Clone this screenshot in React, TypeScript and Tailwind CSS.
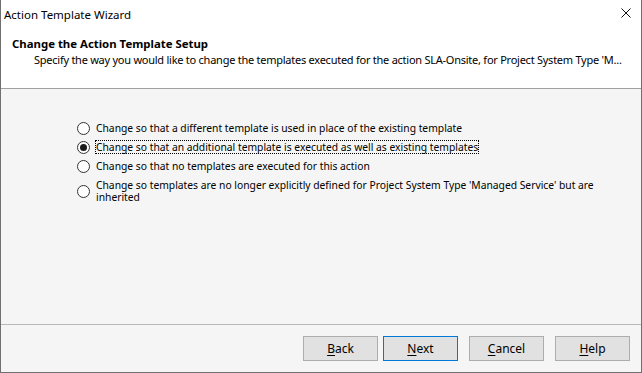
import React from "react";

const font = { fontFamily: '"Noto Sans", "Open Sans", sans-serif' };

function Radio({ checked }: { checked?: boolean }) {
  return (
    <span className="mt-[0px] flex h-[13px] w-[13px] shrink-0 items-center justify-center rounded-full border border-[#333333] bg-white">
      {checked && <span className="h-[7px] w-[7px] rounded-full bg-[#1a1a1a]" />}
    </span>
  );
}

function Btn({ u, rest, primary, className = "" }: { u: string; rest: string; primary?: boolean; className?: string }) {
  return (
    <button
      className={`flex h-[25px] w-[75px] items-center justify-center border bg-[#e1e1e1] text-[12px] text-black ${primary ? "border-[#0078d7]" : "border-[#adadad]"} ${className}`}
    >
      <span className="underline decoration-1 underline-offset-2">{u}</span>
      <span>{rest}</span>
    </button>
  );
}

export default function App() {
  const options = [
    "Change so that a different template is used in place of the existing template",
    "Change so that an additional template is executed as well as existing templates",
    "Change so that no templates are executed for this action",
    "Change so templates are no longer explicitly defined for Project System Type 'Managed Service' but are inherited",
  ];
  return (
    <div className="flex h-[373px] w-[642px] flex-col border-x border-b border-[#707070] bg-[#f5f5f5] text-black" style={font}>
      <div className="flex h-[30px] shrink-0 items-center justify-between bg-white pl-[3px] pr-[10px]">
        <span className="text-[11.5px]">Action Template Wizard</span>
        <svg width="10" height="10" viewBox="0 0 10 10" className="mt-[-4px]">
          <path d="M0.5 0.5L9.5 9.5M9.5 0.5L0.5 9.5" stroke="#111" strokeWidth="1" />
        </svg>
      </div>
      <div className="flex h-[59px] shrink-0 flex-col border-b border-[#a0a0a0] bg-white pl-[11px] pt-[6px]">
        <div className="text-[11.4px] font-bold leading-[16px]">Change the Action Template Setup</div>
        <div className="whitespace-nowrap pl-[22px] text-[11px] leading-[16px] tracking-[-0.25px]">
          Specify the way you would like to change the templates executed for the action SLA-Onsite, for Project System Type 'M...
        </div>
      </div>
      <div className="flex flex-1 flex-col pl-[76px] pt-[33px]">
        {options.map((o, i) => (
          <div key={i} className={`flex items-start gap-[6px] ${i < 3 ? "h-[19px]" : ""}`}>
            <span className={i === 3 ? "mt-[6px]" : ""}>
              <Radio checked={i === 1} />
            </span>
            <span
              className={`text-[10.3px] leading-[12px] ${i === 3 ? "w-[540px]" : ""} ${i === 1 ? "outline outline-1 outline-dotted outline-black" : ""}`}
            >
              {o}
            </span>
          </div>
        ))}
      </div>
      <div className="flex h-[48px] shrink-0 items-start border-t border-[#b9b9b9] pl-[302px] pt-[11px]">
        <Btn u="B" rest="ack" />
        <Btn u="N" rest="ext" primary className="ml-[5px]" />
        <Btn u="C" rest="ancel" className="ml-[11px]" />
        <Btn u="H" rest="elp" className="ml-[11px]" />
      </div>
    </div>
  );
}
